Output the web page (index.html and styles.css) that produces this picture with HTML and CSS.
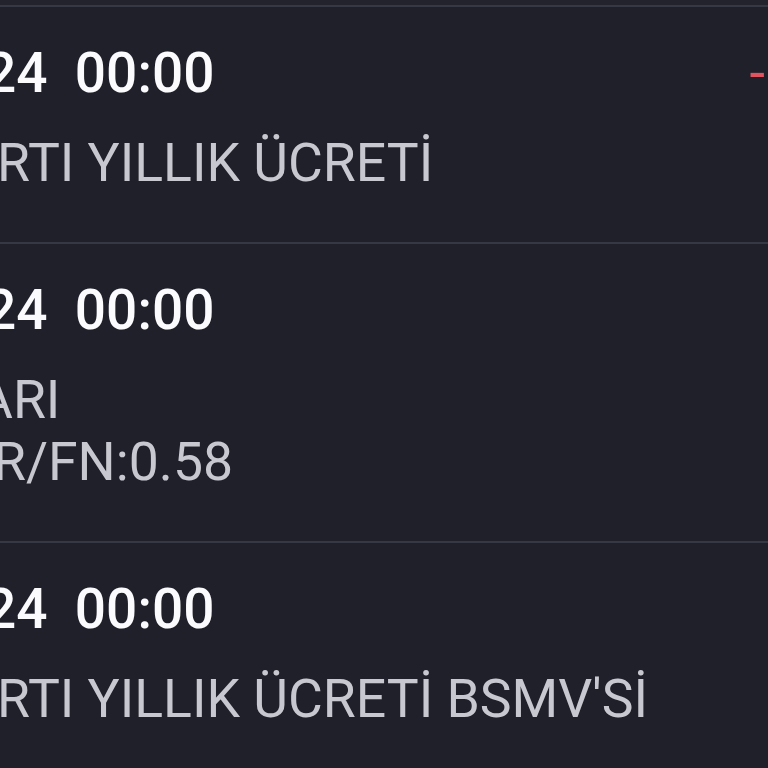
FILE: index.html
```html
<!DOCTYPE html>
<html lang="tr">
<head>
<meta charset="utf-8">
<link rel="stylesheet" href="styles.css">
</head>
<body>
<div class="top-bar"></div>
<ul class="list">
  <li class="item">
    <div class="head">
      <span class="date cut-date">24&nbsp;&nbsp;00:00</span>
      <span class="amount">-</span>
    </div>
    <div class="line cut-r">RTI YILLIK ÜCRETİ</div>
  </li>
  <li class="item">
    <div class="head">
      <span class="date cut-date">24&nbsp;&nbsp;00:00</span>
    </div>
    <div class="line cut-a">ARI</div>
    <div class="line cut-r2">R/FN:0.58</div>
  </li>
  <li class="item">
    <div class="head">
      <span class="date cut-date">24&nbsp;&nbsp;00:00</span>
    </div>
    <div class="line cut-r">RTI YILLIK ÜCRETİ BSMV'Sİ</div>
  </li>
</ul>
</body>
</html>
```
FILE: styles.css
```css
html, body {
  margin: 0;
  padding: 0;
  background: #1f2029;
  overflow: hidden;
  width: 768px;
  height: 768px;
}
body {
  font-family: Roboto, "Noto Sans", sans-serif;
}
.top-bar {
  height: 5px;
  background: #22232d;
}
.list {
  list-style: none;
  margin: 0;
  padding: 0;
}
.item {
  border-top: 2px solid #363843;
  padding: 35px 0 48px 0;
}
.head {
  display: flex;
  justify-content: space-between;
  align-items: baseline;
  height: 62px;
  line-height: 62px;
  margin-bottom: 28px;
  padding-right: 3px;
}
.date {
  font-size: 55px;
  font-weight: 500;
  color: #fbfbfd;
  white-space: pre;
}
.amount {
  font-size: 56px;
  color: #e0535f;
}
.line {
  font-size: 53.5px;
  line-height: 62px;
  color: #c8c8d0;
  white-space: nowrap;
}
.cut-date { text-indent: -15px; display: block; }
.cut-r { text-indent: -3px; }
.cut-a { text-indent: -22px; }
.cut-r2 { text-indent: -7px; }
```
